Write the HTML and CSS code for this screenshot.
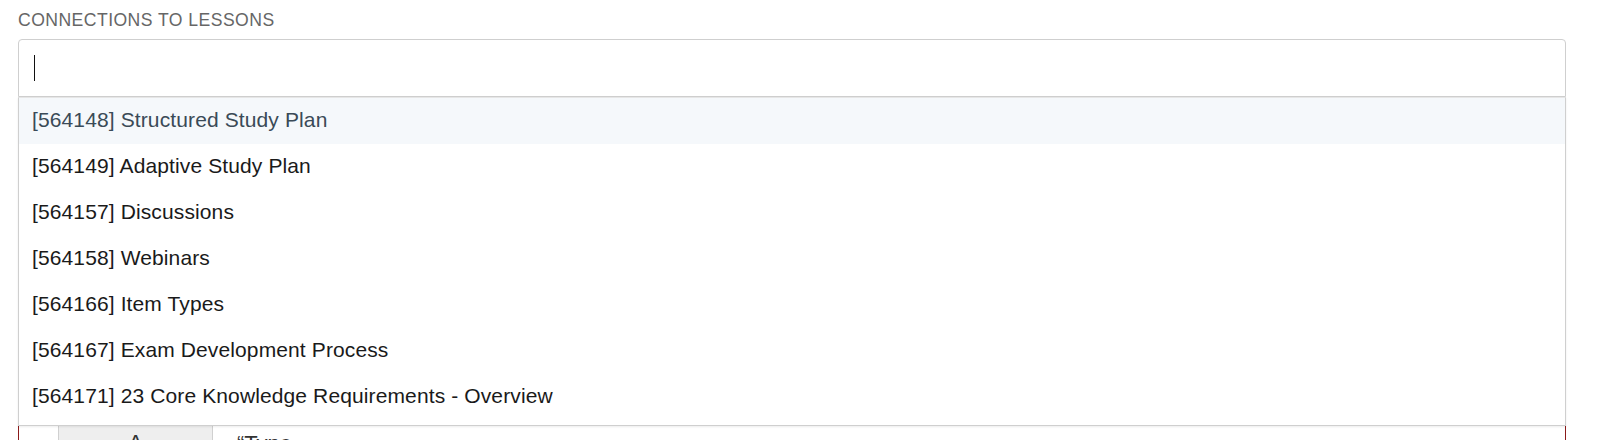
FILE: index.html
```html
<!DOCTYPE html>
<html>
<head>
<meta charset="utf-8">
<link rel="stylesheet" href="styles.css">
</head>
<body>
<div class="field">
  <div class="label">CONNECTIONS TO LESSONS</div>
  <div class="combo">
    <div class="control">
      <span class="caret"></span>
    </div>
    <ul class="menu">
      <li class="option active">[564148] Structured Study Plan</li>
      <li class="option">[564149] Adaptive Study Plan</li>
      <li class="option">[564157] Discussions</li>
      <li class="option">[564158] Webinars</li>
      <li class="option">[564166] Item Types</li>
      <li class="option">[564167] Exam Development Process</li>
      <li class="option">[564171] 23 Core Knowledge Requirements - Overview</li>
    </ul>
    <div class="panel">
      <div class="panel-row">
        <button class="btn">A</button>
        <span class="panel-text">“Type</span>
      </div>
    </div>
  </div>
</div>
</body>
</html>
```

FILE: styles.css
```css
* { box-sizing: border-box; }
html, body { margin: 0; padding: 0; background: #fff; }
body {
  font-family: "Liberation Sans", Arial, Helvetica, sans-serif;
  color: #222;
  min-height: 440px;
  height: 440px;
  overflow: hidden;
}

.field { padding: 8px 34px 0 18px; }

.label {
  font-size: 17.6px;
  letter-spacing: 0.45px;
  color: #666;
  line-height: 24px;
  margin-bottom: 7px;
}

.combo { position: relative; }

.control {
  height: 58px;
  border: 1px solid #cfcfcf;
  border-radius: 4px 4px 0 0;
  display: flex;
  align-items: center;
  padding-left: 15px;
  background: #fff;
}

.caret {
  display: block;
  width: 1px;
  height: 26px;
  background: #111;
}

.menu {
  position: absolute;
  top: 58px;
  left: 0;
  right: 0;
  margin: 0;
  padding: 0 0 5px 0;
  list-style: none;
  background: #fff;
  border: 1px solid #cfcfcf;
  border-top: 1px solid #e6e6e6;
  box-shadow: 0 1px 2px rgba(0,0,0,0.08);
  z-index: 2;
}

.option {
  height: 46px;
  display: flex;
  align-items: center;
  padding: 0 0 2px 13px;
  font-size: 21px;
  letter-spacing: 0.12px;
  color: #1a1a1a;
}

.option.active {
  background: #f5f8fb;
  color: #3a4a57;
}

.panel {
  margin-top: 14px;
  border: 1px solid #8b1a1a;
  border-bottom: 0;
  height: 340px;
  padding: 311px 0 0 39px;
}

.panel-row {
  display: flex;
  align-items: flex-start;
}

.btn {
  width: 155px;
  height: 40px;
  background: #eeeeee;
  border: 1px solid #d0d0d0;
  font-family: "Liberation Sans", Arial, sans-serif;
  font-size: 22px;
  color: #333;
  padding: 0;
}

.panel-text {
  margin-left: 24px;
  font-size: 22px;
  color: #333;
  padding-top: 8px;
}
```
